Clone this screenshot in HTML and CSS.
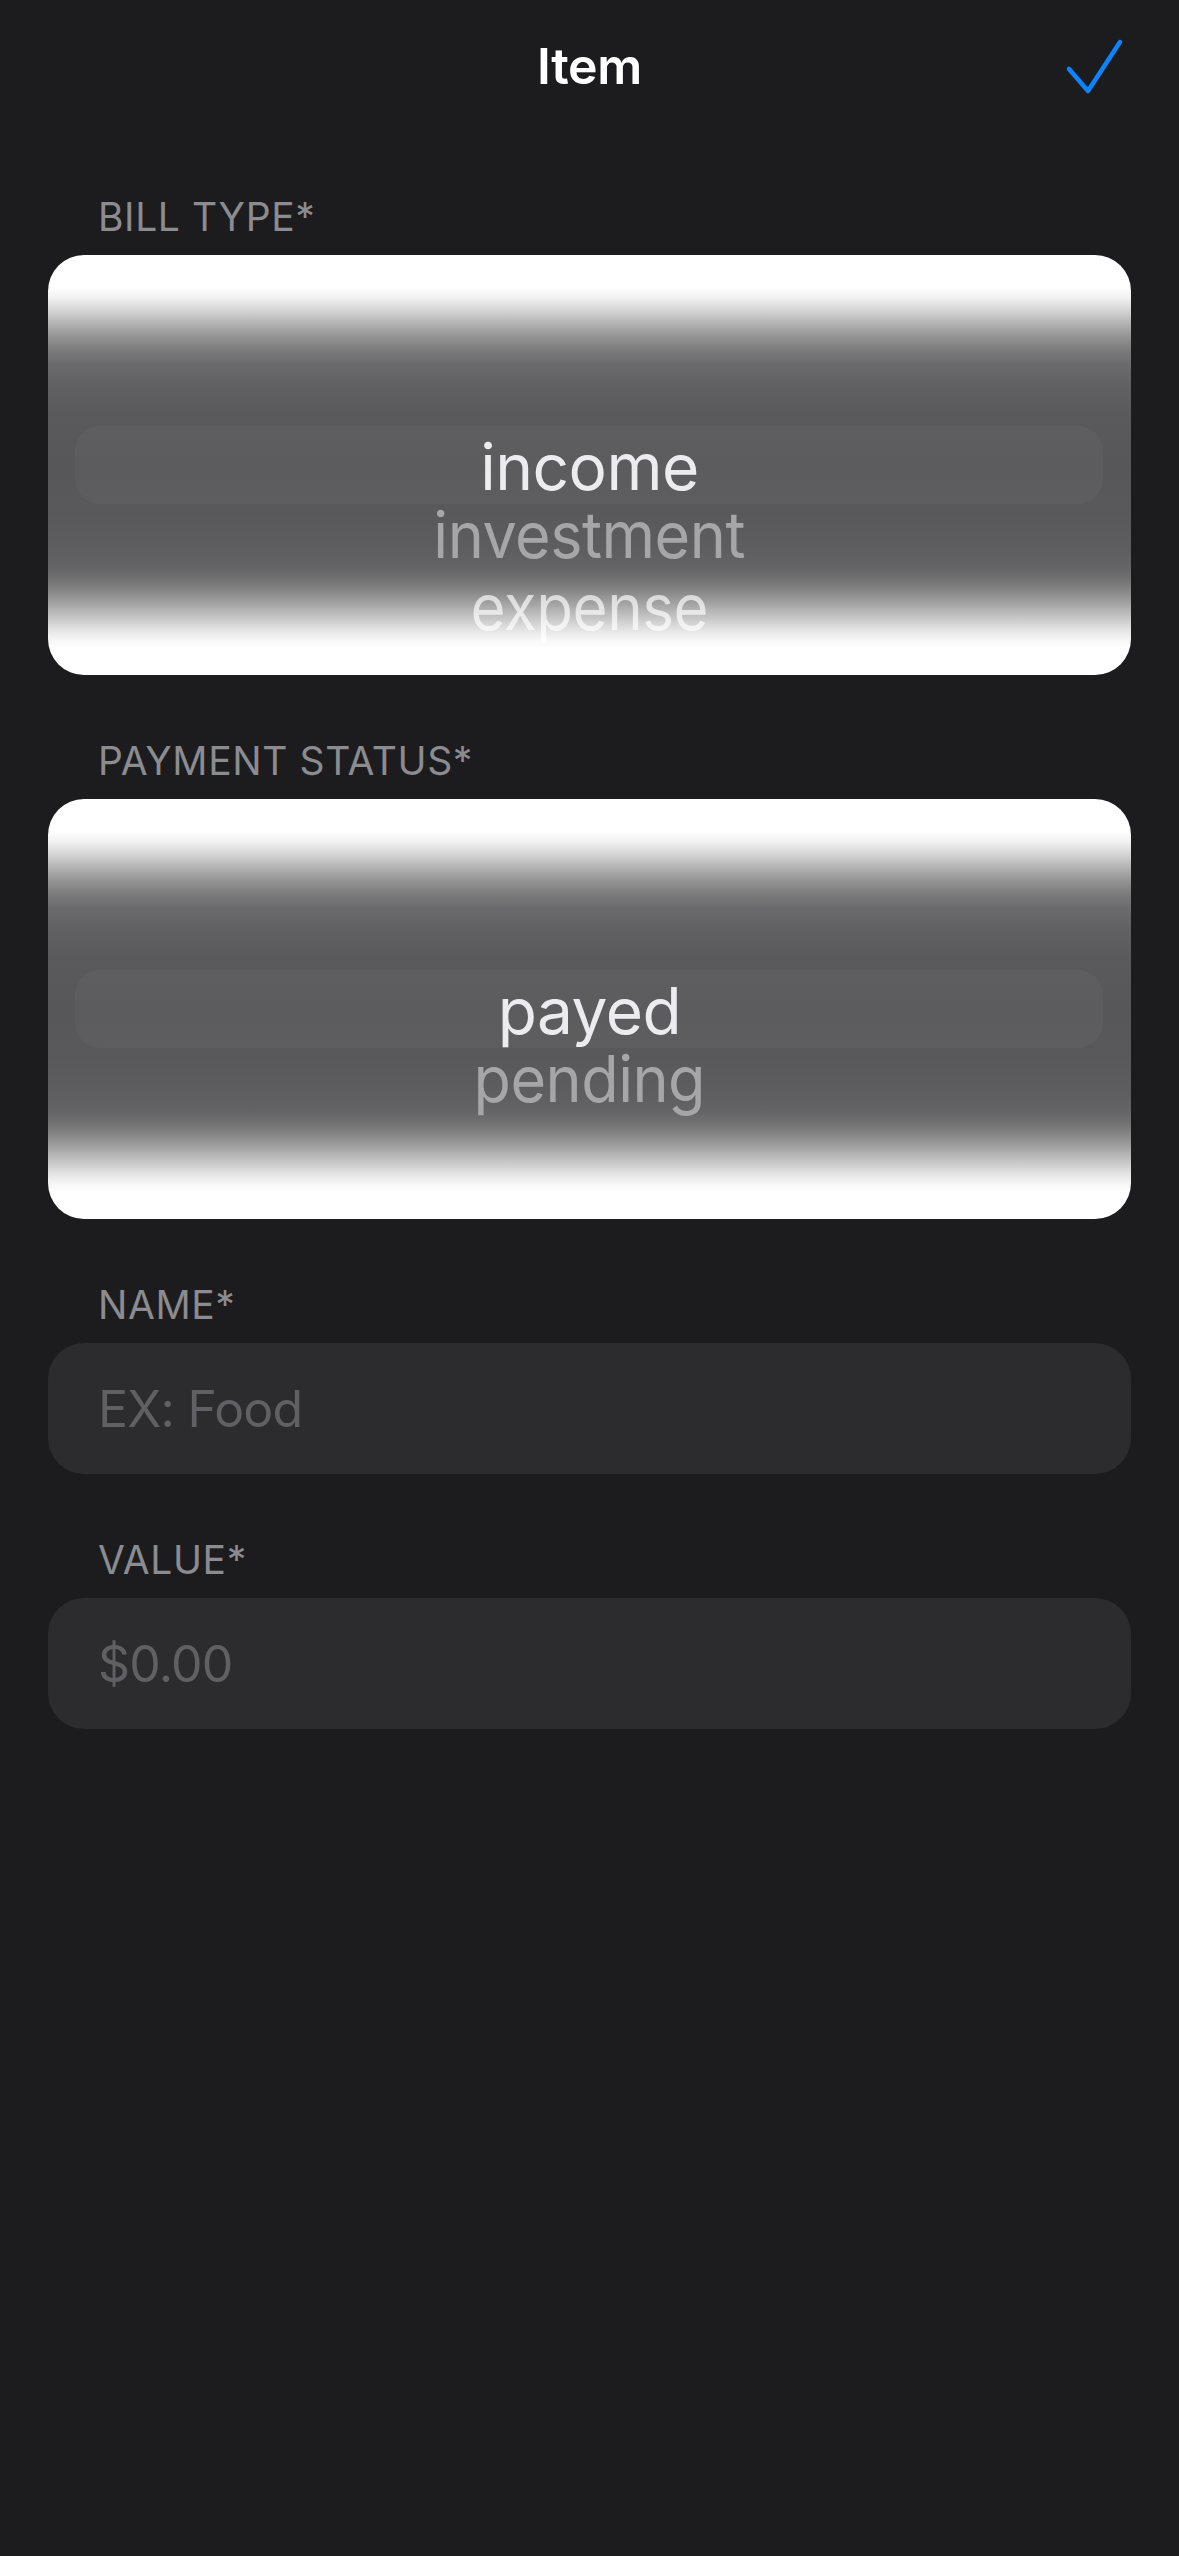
FILE: index.html
```html
<!DOCTYPE html>
<html lang="en">
<head>
<meta charset="utf-8">
<title>Item</title>
<link rel="stylesheet" href="styles.css">
</head>
<body>
<header class="navbar">
  <span class="nav-spacer"></span>
  <h1 class="nav-title">Item</h1>
  <button class="nav-done" aria-label="Done">
    <svg width="76" height="76" viewBox="0 0 76 76"><path d="M13 41 L32 63 L64 14" fill="none" stroke="#0a84ff" stroke-width="4.5" stroke-linecap="round" stroke-linejoin="round"/></svg>
  </button>
</header>

<main class="form">
  <section class="field">
    <div class="field-label">BILL TYPE*</div>
    <div class="picker">
      <div class="picker-highlight"></div>
      <div class="picker-rows">
        <div class="row row-selected">income</div>
        <div class="row row-next">investment</div>
        <div class="row row-far">expense</div>
      </div>
    </div>
  </section>

  <section class="field">
    <div class="field-label">PAYMENT STATUS*</div>
    <div class="picker">
      <div class="picker-highlight"></div>
      <div class="picker-rows">
        <div class="row row-selected">payed</div>
        <div class="row row-next">pending</div>
      </div>
    </div>
  </section>

  <section class="field">
    <div class="field-label">NAME*</div>
    <div class="input"><span class="placeholder">EX: Food</span></div>
  </section>

  <section class="field">
    <div class="field-label">VALUE*</div>
    <div class="input"><span class="placeholder">$0.00</span></div>
  </section>
</main>
</body>
</html>
```

FILE: styles.css
```css
html, body {
  margin: 0;
  padding: 0;
  background: #1c1c1e;
  font-family: Inter, "Noto Sans", "Liberation Sans", sans-serif;
  color: #fff;
}

body {
  width: 1179px;
  min-height: 2556px;
}

.navbar {
  height: 132px;
  display: grid;
  grid-template-columns: 1fr auto 1fr;
  align-items: center;
}

.nav-title {
  margin: 0;
  font-size: 50px;
  font-weight: 600;
  line-height: 132px;
  color: #fff;
  letter-spacing: -0.3px;
}

.nav-done {
  justify-self: end;
  margin-right: 47px;
  padding: 0;
  border: 0;
  background: none;
  width: 76px;
  height: 76px;
  display: block;
}

.nav-done svg {
  display: block;
}

.form {
  padding: 61px 48px 0;
  display: flex;
  flex-direction: column;
  gap: 62px;
}

.field {
  display: flex;
  flex-direction: column;
  gap: 15px;
}

.field-label {
  padding-left: 50px;
  font-size: 39px;
  line-height: 47px;
  color: #8b8b90;
  letter-spacing: 0.6px;
}

.picker {
  position: relative;
  height: 420px;
  border-radius: 36px;
  overflow: hidden;
  background: linear-gradient(to bottom,
    #ffffff 0px,
    #ffffff 32px,
    #f2f2f2 42px,
    #d6d6d6 55px,
    #b4b4b4 68px,
    #939394 82px,
    #7a7a7b 96px,
    #6a6a6c 110px,
    #616163 130px,
    #5a5a5c 160px,
    #575759 210px,
    #59595b 260px,
    #5e5e60 295px,
    #646466 312px,
    #727273 325px,
    #8b8b8b 338px,
    #a9a9a9 351px,
    #c9c9c9 364px,
    #e6e6e6 376px,
    #f8f8f8 386px,
    #ffffff 394px,
    #ffffff 420px);
}

.picker-highlight {
  position: absolute;
  left: 27px;
  right: 28px;
  top: 171px;
  height: 78px;
  border-radius: 25px;
  background: rgba(255, 255, 255, 0.035);
}

.picker-rows {
  position: relative;
  padding-top: 173px;
  display: flex;
  flex-direction: column;
  align-items: center;
}

.row {
  font-size: 64px;
  line-height: 78px;
  height: 78px;
  text-align: center;
  letter-spacing: -0.5px;
  white-space: nowrap;
}

.row-selected {
  color: #ebebf0;
}

.row-next {
  height: 57px;
  line-height: 57px;
  color: #a6a6a8;
  transform: scaleX(0.955);
}

.row-far {
  height: 88px;
  line-height: 88px;
  transform: scaleX(0.94);
  background: linear-gradient(to bottom, #cfcfcf 20px, #ededed 55px, #ffffff 78px);
  -webkit-background-clip: text;
  background-clip: text;
  color: transparent;
}

.input {
  height: 131px;
  border-radius: 36px;
  background: #2c2c2e;
  display: flex;
  align-items: center;
  padding-left: 50px;
}

.placeholder {
  font-size: 50px;
  color: #5f5f64;
  letter-spacing: -0.8px;
}
```
